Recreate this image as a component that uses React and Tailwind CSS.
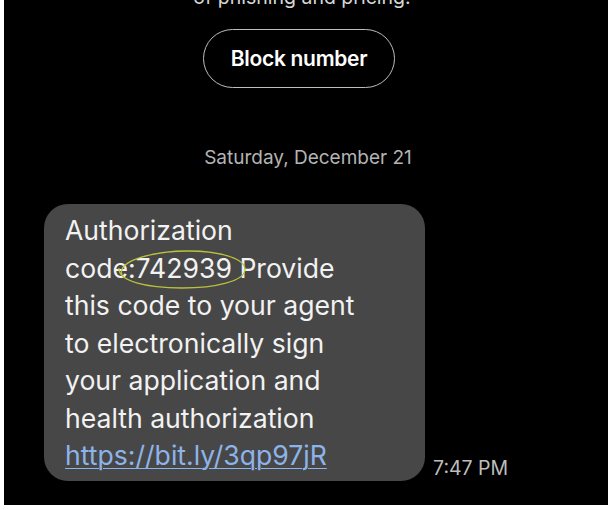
import React from 'react';

const App = () => {
  return (
    <div className="w-[612px] h-[510px] bg-white pl-[4px] pr-[4px] pb-[5px]" style={{ fontFamily: 'Inter, "Noto Sans", sans-serif' }}>
      <div className="relative h-full w-full bg-black overflow-hidden flex flex-col items-center">
        {/* cut off line of previous notice */}
        <p className="mt-[-14px] text-[19.5px] leading-[22px] text-[#d6d6d6] ml-[-8px]">of phishing and pricing.</p>

        {/* Block number */}
        <button className="mt-[21px] h-[59px] w-[192px] rounded-full border border-[#bdbdbd] text-white text-[21px] font-semibold tracking-[-0.3px] ml-[-14px]">
          Block number
        </button>

        {/* Date */}
        <p className="mt-[58px] text-[19px] leading-[24px] text-[#b4b4b4] ml-[4px]">Saturday, December 21</p>

        {/* Message row */}
        <div className="mt-[34px] self-stretch flex items-end pl-[40px]">
          <div className="relative w-[381px] rounded-[24px] bg-[#474747] pl-[21px] pr-[10px] pt-[8px] pb-[6px] text-[26.6px] leading-[37.5px] text-[#f2f2f2]">
            <p>
              Authorization
              <br />
              code:742939 Provide
              <br />
              this code to your agent
              <br />
              to electronically sign
              <br />
              your application and
              <br />
              health authorization
              <br />
              <span className="text-[#8db4ea] underline decoration-1 underline-offset-[3px]">https://bit.ly/3qp97jR</span>
            </p>
            {/* hand drawn ring around the code */}
            <svg className="absolute left-[72px] top-[44px] pointer-events-none" width="132" height="42" viewBox="0 0 132 42" fill="none">
              <path d="M6 27 C 0 12, 40 3, 72 3 C 108 3, 130 12, 129 22 C 128 33, 100 40, 66 40 C 30 40, 2 33, 3 20" stroke="#b9c23c" strokeWidth="1.3" />
            </svg>
          </div>
          <span className="ml-[8px] mb-[-3px] text-[19.5px] text-[#bdbdbd]">7:47 PM</span>
        </div>
      </div>
    </div>
  );
};

export default App;
